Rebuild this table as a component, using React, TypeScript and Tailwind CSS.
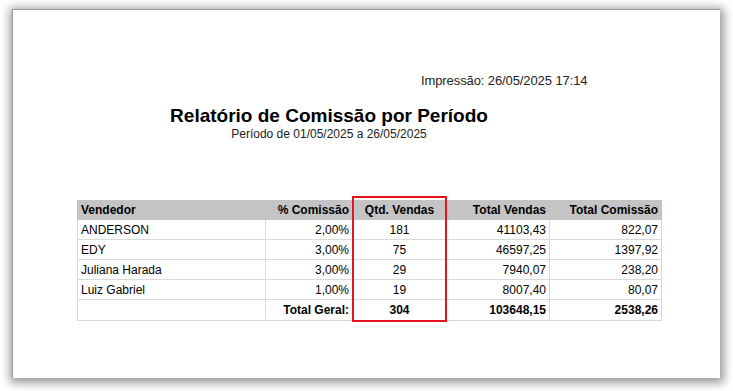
const rows = [
  { nome: "ANDERSON", pct: "2,00%", qtd: "181", vendas: "41103,43", comissao: "822,07" },
  { nome: "EDY", pct: "3,00%", qtd: "75", vendas: "46597,25", comissao: "1397,92" },
  { nome: "Juliana Harada", pct: "3,00%", qtd: "29", vendas: "7940,07", comissao: "238,20" },
  { nome: "Luiz Gabriel", pct: "1,00%", qtd: "19", vendas: "8007,40", comissao: "80,07" },
];

export default function App() {
  return (
    <div className="w-[733px] h-[391px] bg-white pt-[9px] pl-[12px] font-['Liberation_Sans',Arial,sans-serif] text-black">
      <div className="relative w-[708px] h-[369px] bg-white border-t border-l border-[#9a9a9a] shadow-[1px_2px_9px_3px_rgba(0,0,0,0.4)]">
        {/* cabeçalho */}
        <div className="pt-[63px] pl-[408px] text-[13px] leading-[15px] tracking-[-0.1px] text-[#222]">
          Impressão: 26/05/2025 17:14
        </div>

        <div className="mt-[17px] ml-[116px] w-[400px] text-center">
          <h1 className="text-[19px] leading-[22px] font-bold">Relatório de Comissão por Período</h1>
          <p className="text-[12px] leading-[14px] text-[#222]">
            Período de 01/05/2025 a 26/05/2025
          </p>
        </div>

        {/* tabela */}
        <div className="relative mt-[59px] ml-[64px] w-[585px]">
          <table className="w-full border-collapse text-[12px] leading-[14px]">
            <thead>
              <tr className="bg-[#c4c4c4] h-[19px]">
                <th className="w-[188px] text-left font-bold px-[3px] border border-[#c4c4c4]">Vendedor</th>
                <th className="w-[87px] text-right font-bold px-[3px] border border-[#c4c4c4]">% Comissão</th>
                <th className="w-[94px] text-center font-bold px-[3px] border border-[#c4c4c4]">Qtd. Vendas</th>
                <th className="w-[103px] text-right font-bold px-[3px] border border-[#c4c4c4]">Total Vendas</th>
                <th className="text-right font-bold px-[3px] border border-[#c4c4c4]">Total Comissão</th>
              </tr>
            </thead>
            <tbody>
              {rows.map((r) => (
                <tr key={r.nome} className="h-[20px]">
                  <td className="px-[3px] border border-[#d9d9d9]">{r.nome}</td>
                  <td className="px-[3px] text-right border border-[#d9d9d9]">{r.pct}</td>
                  <td className="px-[3px] text-center border border-[#d9d9d9]">{r.qtd}</td>
                  <td className="px-[3px] text-right border border-[#d9d9d9]">{r.vendas}</td>
                  <td className="px-[3px] text-right border border-[#d9d9d9]">{r.comissao}</td>
                </tr>
              ))}
              <tr className="h-[21px] font-bold">
                <td className="px-[3px] border border-[#d9d9d9]"></td>
                <td className="px-[3px] text-right border border-[#d9d9d9]">Total Geral:</td>
                <td className="px-[3px] text-center border border-[#d9d9d9]">304</td>
                <td className="px-[3px] text-right border border-[#d9d9d9]">103648,15</td>
                <td className="px-[3px] text-right border border-[#d9d9d9]">2538,26</td>
              </tr>
            </tbody>
          </table>
          {/* destaque */}
          <div className="absolute top-[-4px] left-[275px] w-[95px] h-[126px] border-2 border-[#e3141b] pointer-events-none" />
        </div>
      </div>
    </div>
  );
}
